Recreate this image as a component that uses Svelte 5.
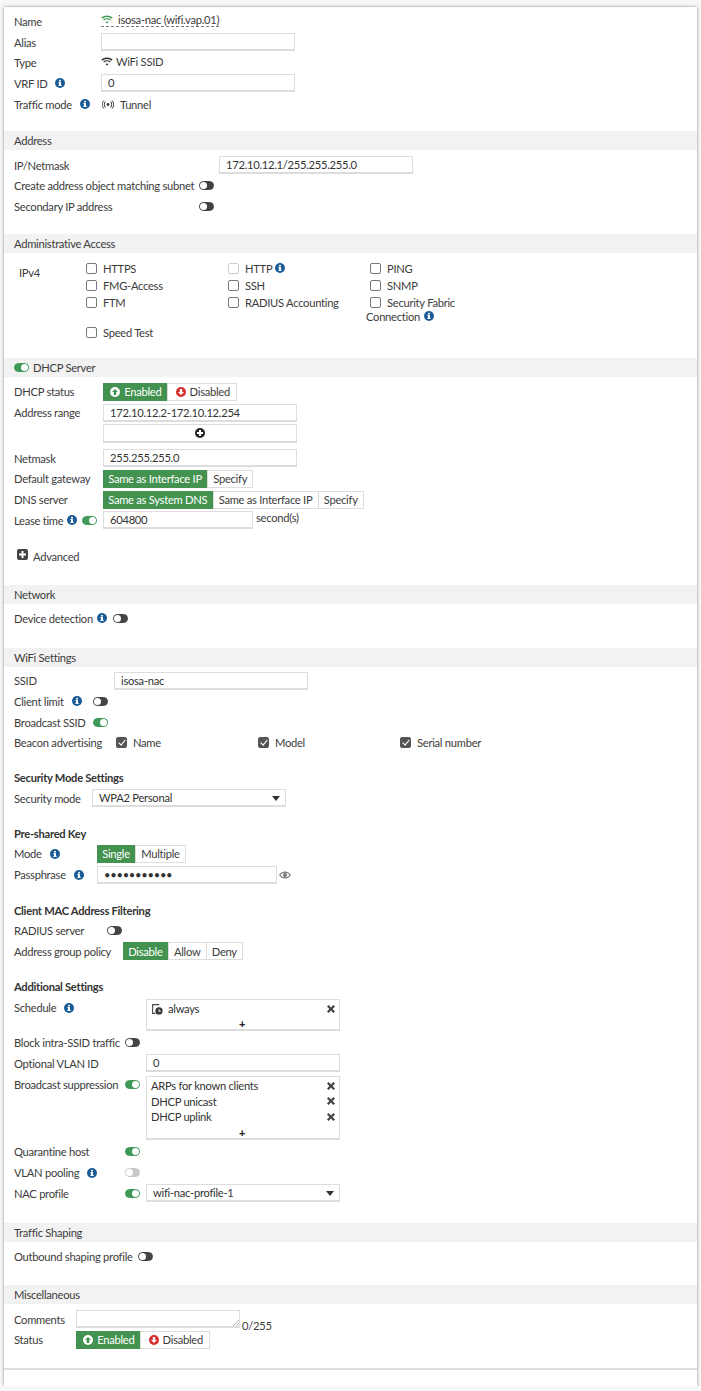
<script>
	const adminRows = [
		[{ t: "HTTPS" }, { t: "HTTP", info: true, faded: true }, { t: "PING" }],
		[{ t: "FMG-Access" }, { t: "SSH" }, { t: "SNMP" }],
		[{ t: "FTM" }, { t: "RADIUS Accounting" }, { t: "Security Fabric" }]
	];
	const suppression = ["ARPs for known clients", "DHCP unicast", "DHCP uplink"];
</script>

{#snippet info()}
	<svg class="info" viewBox="0 0 10 10"><circle cx="5" cy="5" r="5" fill="#1b5c97" /><rect x="4" y="4.2" width="2" height="3.4" fill="#fff" /><rect x="3.3" y="6.9" width="3.4" height="1" fill="#fff" /><rect x="3.3" y="4.2" width="2" height="0.9" fill="#fff" /><circle cx="5" cy="2.7" r="1" fill="#fff" /></svg>
{/snippet}

{#snippet toggle(state)}
	<span class="tog {state}"></span>
{/snippet}

{#snippet wifi(color)}
	<svg class="wifi" viewBox="0 0 12 9" fill="none" stroke={color} stroke-width="1.4"><path d="M.8 3.1C3.6.7 8.4.7 11.2 3.1" /><path d="M2.7 5C4.5 3.5 7.5 3.5 9.3 5" /><path d="M6 8.6 4.4 6.9C5.3 6.2 6.7 6.2 7.6 6.9Z" fill={color} stroke="none" /></svg>
{/snippet}

{#snippet cross()}
	<svg class="cross" viewBox="0 0 9 9"><path d="M1.8 0 4.5 2.7 7.2 0 9 1.8 6.3 4.5 9 7.2 7.2 9 4.5 6.3 1.8 9 0 7.2 2.7 4.5 0 1.8Z" fill="#444" /></svg>
{/snippet}

{#snippet status()}
	<div class="seg status">
		<span class="on">
			<svg class="arrow" viewBox="0 0 10 10"><circle cx="5" cy="5" r="5" fill="#fff" /><path d="M5 2 8 5H6.2V8H3.8V5H2Z" fill="#43924f" /></svg>
			Enabled
		</span>
		<span>
			<svg class="arrow" viewBox="0 0 10 10"><circle cx="5" cy="5" r="5" fill="#d62c2c" /><path d="M5 8 2 5H3.8V2H6.2V5H8Z" fill="#fff" /></svg>
			Disabled
		</span>
	</div>
{/snippet}

<div class="card">
	<section class="basic">
		<div class="row"><span class="lbl">Name</span>
			<span class="name">{@render wifi("#3f9a58")}<span class="nm">isosa-nac (wifi.vap.01)</span></span>
		</div>
		<div class="row"><span class="lbl">Alias</span><span class="input"></span></div>
		<div class="row"><span class="lbl">Type</span><span class="val up">{@render wifi("#333")} WiFi SSID</span></div>
		<div class="row"><span class="lbl">VRF ID {@render info()}</span><span class="input">0</span></div>
		<div class="row"><span class="lbl">Traffic mode {@render info()}</span>
			<span class="val">
				<svg class="tunnel" viewBox="0 0 12 9" fill="none" stroke="#333" stroke-width="1"><circle cx="6" cy="4.5" r="1.4" fill="#333" stroke="none" /><path d="M3.4 1.5C2 3.2 2 5.8 3.4 7.5M8.6 1.5C10 3.2 10 5.8 8.6 7.5M1.8.5C-.2 3-.2 6 1.8 8.5M10.2.5C12.2 3 12.2 6 10.2 8.5" /></svg>
				Tunnel
			</span>
		</div>
	</section>

	<h3>Address</h3>
	<section class="addr">
		<div class="row"><span class="lbl">IP/Netmask</span><span class="input">172.10.12.1/255.255.255.0</span></div>
		<div class="row"><span class="lbl">Create address object matching subnet {@render toggle("off")}</span></div>
		<div class="row"><span class="lbl">Secondary IP address {@render toggle("off")}</span></div>
	</section>

	<h3>Administrative Access</h3>
	<section class="admin">
		<span class="ipv4">IPv4</span>
		<div class="checks">
			{#each adminRows as cols}
				{#each cols as c}
					<label class="chk"><span class="box" class:faded={c.faded}></span>{c.t}{#if c.info}&nbsp;{@render info()}{/if}</label>
				{/each}
			{/each}
			<span class="conn">Connection {@render info()}</span>
			<label class="chk speed"><span class="box"></span>Speed Test</label>
		</div>
	</section>

	<h3 class="dhcp-head">{@render toggle("on")} DHCP Server</h3>
	<section class="dhcp">
		<div class="row"><span class="lbl">DHCP status</span>{@render status()}</div>
		<div class="row"><span class="lbl">Address range</span><span class="input">172.10.12.2-172.10.12.254</span></div>
		<div class="row add"><span class="lbl"></span><span class="input plus">
			<svg class="addicon" viewBox="0 0 10 10"><circle cx="5" cy="5" r="5" fill="#222" /><path d="M4 2H6V4H8V6H6V8H4V6H2V4H4Z" fill="#fff" /></svg>
		</span></div>
		<div class="row"><span class="lbl">Netmask</span><span class="input">255.255.255.0</span></div>
		<div class="row"><span class="lbl">Default gateway</span>
			<div class="seg"><span class="on">Same as Interface IP</span><span>Specify</span></div>
		</div>
		<div class="row"><span class="lbl">DNS server</span>
			<div class="seg"><span class="on">Same as System DNS</span><span>Same as Interface IP</span><span>Specify</span></div>
		</div>
		<div class="row"><span class="lbl">Lease time {@render info()} {@render toggle("on")}</span>
			<span class="input lease">604800</span><span class="unit">second(s)</span>
		</div>
		<div class="advanced">
			<svg class="advicon" viewBox="0 0 11 11"><rect width="11" height="11" rx="2" fill="#444" /><path d="M4.5 2H6.5V4.5H9V6.5H6.5V9H4.5V6.5H2V4.5H4.5Z" fill="#fff" /></svg>
			Advanced
		</div>
	</section>

	<h3>Network</h3>
	<section class="network">
		<div class="row"><span class="lbl">Device detection {@render info()} {@render toggle("off")}</span></div>
	</section>

	<h3>WiFi Settings</h3>
	<section class="wifiset">
		<div class="row"><span class="lbl">SSID</span><span class="input">isosa-nac</span></div>
		<div class="row"><span class="lbl limit">Client limit {@render info()} {@render toggle("off")}</span></div>
		<div class="row"><span class="lbl">Broadcast SSID {@render toggle("on")}</span></div>
		<div class="row"><span class="lbl">Beacon advertising</span>
			<div class="beacon">
				<label class="chk"><span class="box checked"></span>Name</label>
				<label class="chk"><span class="box checked"></span>Model</label>
				<label class="chk"><span class="box checked"></span>Serial number</label>
			</div>
		</div>

		<h4>Security Mode Settings</h4>
		<div class="row sec"><span class="lbl">Security mode</span>
			<span class="input select">WPA2 Personal<i class="caret"></i></span>
		</div>

		<h4>Pre-shared Key</h4>
		<div class="row psk"><span class="lbl">Mode {@render info()}</span>
			<div class="seg"><span class="on">Single</span><span>Multiple</span></div>
		</div>
		<div class="row psk"><span class="lbl">Passphrase {@render info()}</span>
			<span class="input pass">•••••••••••</span>
			<svg class="eye" viewBox="0 0 12 8"><path d="M0 4C3-.8 9-.8 12 4 9 8.800 3 8.800 0 4Z" fill="#777" /><path d="M1.400 4C3.800 1 8.200 1 10.600 4 8.200 7 3.800 7 1.400 4Z" fill="#fff" /><circle cx="6" cy="4" r="2" fill="#777" /></svg>
		</div>

		<h4>Client MAC Address Filtering</h4>
		<div class="row mac"><span class="lbl">RADIUS server <span class="gap"></span>{@render toggle("off")}</span></div>
		<div class="row mac"><span class="lbl">Address group policy</span>
			<div class="seg"><span class="on">Disable</span><span>Allow</span><span>Deny</span></div>
		</div>

		<h4>Additional Settings</h4>
		<div class="row extra top sched-row"><span class="lbl">Schedule {@render info()}</span>
			<div class="multi">
				<div class="item">
					<span>
						<svg class="sched" viewBox="0 0 11 11"><path d="M1 1H7.500V2H2V9H4V10H1Z" fill="#444" /><circle cx="7.300" cy="7.300" r="3.300" fill="#333" /><path d="M7 5.500H7.800V7.200H9V8H7Z" fill="#fff" /></svg>
						always
					</span>
					{@render cross()}
				</div>
				<div class="more">+</div>
			</div>
		</div>
		<div class="row extra"><span class="lbl">Block intra-SSID traffic {@render toggle("off")}</span></div>
		<div class="row extra"><span class="lbl">Optional VLAN ID</span><span class="input">0</span></div>
		<div class="row extra top supp-row"><span class="lbl">Broadcast suppression {@render toggle("on")}</span>
			<div class="multi">
				{#each suppression as s}
					<div class="item"><span>{s}</span>{@render cross()}</div>
				{/each}
				<div class="more">+</div>
			</div>
		</div>
		<div class="row extra"><span class="lbl">Quarantine host {@render toggle("on")}</span></div>
		<div class="row extra"><span class="lbl">VLAN pooling {@render info()} {@render toggle("dis")}</span></div>
		<div class="row extra"><span class="lbl">NAC profile {@render toggle("on")}</span>
			<span class="input select">wifi-nac-profile-1<i class="caret"></i></span>
		</div>
	</section>

	<h3>Traffic Shaping</h3>
	<section class="shaping">
		<div class="row"><span class="lbl">Outbound shaping profile {@render toggle("off")}</span></div>
	</section>

	<h3>Miscellaneous</h3>
	<section class="misc">
		<div class="row"><span class="lbl">Comments</span>
			<span class="input area">
				<svg class="grip" viewBox="0 0 6 6" fill="none" stroke="#999" stroke-width=".7"><path d="M0 6 6 0M3 6 6 3" /></svg>
			</span>
			<span class="count">0/255</span>
		</div>
		<div class="row"><span class="lbl">Status</span>{@render status()}</div>
	</section>

	<footer></footer>
</div>

<style>
	:global(body) {
		background: #f7f7f7;
		font-family: Lato, "Open Sans", sans-serif;
	}
	.card {
		box-sizing: border-box;
		width: 693px;
		height: 1379px;
		margin: 7px 0 0 4px;
		padding-top: 4px;
		background: #fff;
		box-shadow: 0 0 3px rgba(0, 0, 0, 0.45);
		color: #3c3c3c;
		font-size: 11.2px;
		letter-spacing: -0.28px;
		display: flow-root;
	}
	section {
		padding-bottom: 0.5px;
	}
	.row {
		display: flex;
		align-items: center;
		height: 20.7px;
		padding-left: 10px;
		white-space: nowrap;
	}
	.lbl {
		display: flex;
		align-items: center;
		flex: none;
		gap: 4px;
		height: 100%;
	}
	h3 {
		display: flex;
		align-items: center;
		gap: 4px;
		height: 19px;
		margin: 16.5px 0 4.5px;
		padding-left: 10px;
		background: #f2f2f2;
		font-size: inherit;
		font-weight: 400;
	}
	h4 {
		height: 20.7px;
		margin: 14.4px 0 0;
		padding-left: 10px;
		font-size: inherit;
		font-weight: 700;
		line-height: 21px;
		color: #333;
	}
	.input {
		box-sizing: border-box;
		display: block;
		flex: none;
		width: 194px;
		height: 18px;
		padding-left: 6px;
		border: 1px solid #ddd;
		border-bottom-width: 2px;
		color: #333;
		line-height: 16px;
	}
	.info {
		flex: none;
		width: 10px;
		height: 10px;
	}
	.tog {
		position: relative;
		box-sizing: border-box;
		flex: none;
		width: 15px;
		height: 9px;
		margin-left: auto;
		border-radius: 5px;
		background: #444;
		border: 1px solid #444;
	}
	.tog::after {
		content: "";
		position: absolute;
		top: 0;
		left: 0;
		width: 7px;
		height: 7px;
		border-radius: 50%;
		background: #fff;
	}
	.tog.on {
		background: #3f9a58;
		border-color: #3f9a58;
	}
	.tog.on::after {
		left: 6px;
	}
	.tog.dis {
		background: #c8c8c8;
		border-color: #c8c8c8;
	}
	.seg {
		display: inline-flex;
		flex: none;
		height: 18px;
		border: 1px solid #ddd;
		border-left: 0;
		box-sizing: border-box;
	}
	.seg span {
		display: flex;
		align-items: center;
		gap: 4px;
		padding: 0 5.2px;
		border-left: 1px solid #ddd;
	}
	.seg.status span {
		padding-right: 6px;
	}
	.seg .on {
		margin: -1px 0;
		background: #43924f;
		border-left: 0;
		color: #fff;
	}
	.arrow {
		width: 10px;
		height: 10px;
		margin-left: 2px;
	}

	.basic .lbl {
		width: 87px;
		gap: 8px;
	}
	.name {
		display: inline-flex;
		align-items: center;
		gap: 5px;
		margin-top: -3px;
		border-bottom: 1px dashed #777;
	}
	.wifi {
		width: 12px;
		height: 9px;
	}
	.val {
		display: inline-flex;
		align-items: center;
		gap: 3px;
	}
	.val.up {
		margin-top: -3px;
	}
	.tunnel {
		width: 12px;
		height: 9px;
		margin: 0 3px 0 1px;
	}

	.addr .lbl {
		width: 200px;
		margin-right: 5px;
	}

	.admin {
		display: flex;
		padding-left: 15px;
		height: 93px;
	}
	.ipv4 {
		width: 67px;
		margin-top: 8px;
	}
	.checks {
		display: grid;
		grid-template-columns: repeat(3, 142px);
		grid-auto-rows: 17px;
		margin-top: 2px;
	}
	.chk {
		display: flex;
		align-items: center;
		white-space: nowrap;
	}
	.box {
		box-sizing: border-box;
		flex: none;
		width: 11px;
		height: 11px;
		margin-right: 6px;
		border: 1px solid #777;
		border-radius: 2px;
		background: #fff;
	}
	.box.faded {
		border-color: #ccc;
	}
	.box.checked {
		position: relative;
		background: #555;
		border-color: #555;
	}
	.box.checked::after {
		content: "";
		position: absolute;
		left: 3px;
		top: 0;
		width: 2.5px;
		height: 6px;
		border: solid #fff;
		border-width: 0 1.5px 1.5px 0;
		transform: rotate(40deg);
	}
	.conn {
		grid-column: 3;
		grid-row: 4;
		display: flex;
		align-items: center;
		gap: 4px;
		height: 11px;
		margin-left: -4px;
	}
	.speed {
		grid-column: 1;
		grid-row: 5;
		margin-top: -8px;
	}

	.dhcp-head {
		margin-top: 7px;
	}
	.dhcp-head .tog {
		margin-left: 0;
	}
	.dhcp {
		padding-bottom: 4.5px;
	}
	.dhcp .lbl {
		width: 89px;
	}
	.dhcp .lbl .tog {
		margin-right: 6px;
	}
	.add {
		height: 21px;
		margin-bottom: 4px;
	}
	.plus {
		display: flex;
		align-items: center;
		justify-content: center;
		height: 19px;
		padding-left: 0;
	}
	.addicon {
		width: 10px;
		height: 10px;
	}
	.lease {
		width: 150px;
	}
	.unit {
		margin: -5px 0 0 3px;
	}
	.advanced {
		display: flex;
		align-items: center;
		gap: 5px;
		height: 14px;
		margin: 19px 0 0 13px;
	}
	.advicon {
		width: 11px;
		height: 11px;
		margin-top: -4px;
	}

	.network {
		padding-bottom: 2.5px;
	}
	.network .tog {
		margin-left: 2px;
	}

	.wifiset {
		margin-top: -1px;
		padding-bottom: 2.5px;
	}
	.wifiset .row > .lbl {
		width: 94px;
		margin-right: 6px;
	}
	.wifiset .row > .limit {
		gap: 8px;
	}
	.beacon {
		display: grid;
		grid-template-columns: repeat(3, 142px);
		margin-left: 2px;
	}
	.wifiset .row.sec {
		height: 20px;
	}
	.wifiset .row.sec > .lbl {
		width: 78px;
		margin-right: 0;
	}
	.select {
		position: relative;
	}
	.caret {
		position: absolute;
		right: 5px;
		top: 6px;
		border: 4px solid transparent;
		border-top: 5px solid #333;
		border-bottom: 0;
	}
	.wifiset .row.psk {
		height: 21px;
	}
	.wifiset .row.psk > .lbl {
		width: 83px;
		gap: 8px;
		margin-right: 0;
	}
	.pass {
		width: 180px;
	}
	.eye {
		width: 12px;
		height: 8px;
		margin-left: 2px;
	}
	.wifiset .row.mac > .lbl {
		width: 109px;
		margin-right: 0;
	}
	.gap {
		width: 15px;
	}
	.row.mac .tog {
		margin-left: 0;
		margin-right: auto;
	}
	.wifiset .row.extra > .lbl {
		width: 126px;
		gap: 5px;
		margin-right: 6px;
	}
	.extra .info {
		margin-left: 3px;
	}
	.row.top {
		height: auto;
		align-items: flex-start;
	}
	.sched-row {
		margin: 2px 0 1px;
	}
	.supp-row {
		margin: 2px 0 2px;
	}
	.row.top .lbl {
		height: 20px;
		margin-top: -1px;
	}
	.multi {
		box-sizing: border-box;
		width: 194px;
		padding: 1px 4px 0;
		border: 1px solid #ddd;
		border-bottom-width: 2px;
		color: #333;
	}
	.item {
		display: flex;
		align-items: center;
		justify-content: space-between;
		height: 15.6px;
	}
	.item span {
		display: flex;
		align-items: center;
		gap: 5px;
	}
	.more {
		height: 13px;
		text-align: center;
		font-weight: 900;
		font-size: 11px;
		line-height: 15px;
		padding-right: 2px;
		color: #222;
	}
	.cross {
		width: 8px;
		height: 8px;
	}
	.sched {
		width: 12px;
		height: 12px;
	}

	.shaping {
		margin-top: 1px;
		padding-bottom: 2px;
	}
	.shaping .tog {
		margin-left: 1px;
	}
	.misc .lbl {
		width: 62px;
	}
	.area {
		position: relative;
		width: 164px;
	}
	.grip {
		position: absolute;
		right: 0;
		bottom: 0;
		width: 6px;
		height: 6px;
	}
	.count {
		margin: 12px 0 0 2px;
	}
	footer {
		height: 17px;
		margin-top: 17px;
		border-top: 2px solid #ddd;
	}
</style>
